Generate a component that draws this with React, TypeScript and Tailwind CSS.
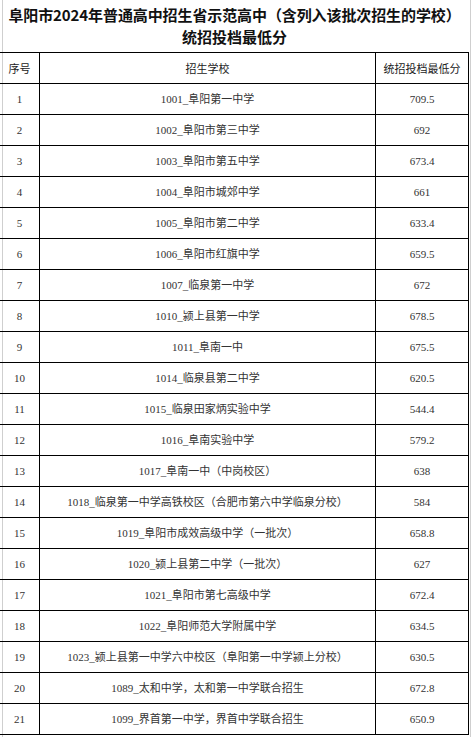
const rows: [string, string][] = [
  ['1001_阜阳第一中学', '709.5'],
  ['1002_阜阳市第三中学', '692'],
  ['1003_阜阳市第五中学', '673.4'],
  ['1004_阜阳市城郊中学', '661'],
  ['1005_阜阳市第二中学', '633.4'],
  ['1006_阜阳市红旗中学', '659.5'],
  ['1007_临泉第一中学', '672'],
  ['1010_颍上县第一中学', '678.5'],
  ['1011_阜南一中', '675.5'],
  ['1014_临泉县第二中学', '620.5'],
  ['1015_临泉田家炳实验中学', '544.4'],
  ['1016_阜南实验中学', '579.2'],
  ['1017_阜南一中（中岗校区）', '638'],
  ['1018_临泉第一中学高铁校区（合肥市第六中学临泉分校）', '584'],
  ['1019_阜阳市成效高级中学（一批次）', '658.8'],
  ['1020_颍上县第二中学（一批次）', '627'],
  ['1021_阜阳市第七高级中学', '672.4'],
  ['1022_阜阳师范大学附属中学', '634.5'],
  ['1023_颍上县第一中学六中校区（阜阳第一中学颍上分校）', '630.5'],
  ['1089_太和中学，太和第一中学联合招生', '672.8'],
  ['1099_界首第一中学，界首中学联合招生', '650.9'],
];

const body = "font-['Liberation_Serif','Noto_Sans_CJK_SC',serif]";

export default function App() {
  return (
    <div className="w-[473px] h-[737px] overflow-hidden bg-white">
      <div className="ml-[2px] mr-[2px] h-full border-x border-[#cfcfcf]">
        <div className="-ml-[3px] w-[469px]">
          <div className="h-[52px] pt-[4px] text-center font-['Noto_Sans_CJK_SC',sans-serif] font-bold text-[15px] leading-[22px] text-[#111] whitespace-nowrap">
            <div className="tracking-[-0.1px]">阜阳市2024年普通高中招生省示范高中（含列入该批次招生的学校）</div>
            <div>统招投档最低分</div>
          </div>
          <div className="border-t border-black">
            <div className="flex h-[31px] border-b border-black text-[11px] text-[#222] font-['Noto_Sans_CJK_SC',sans-serif]">
              <div className="w-[40px] border-r border-black flex items-center justify-center">序号</div>
              <div className="w-[336px] border-r border-black flex items-center justify-center">招生学校</div>
              <div className="w-[93px] border-r border-black flex items-center justify-center">统招投档最低分</div>
            </div>
            {rows.map(([name, score], i) => (
              <div key={i} className={`flex h-[31px] border-b border-black text-[11px] text-[#333] ${body}`}>
                <div className="w-[40px] border-r border-black flex items-center justify-center">{i + 1}</div>
                <div className="w-[336px] border-r border-black flex items-center justify-center whitespace-nowrap">{name}</div>
                <div className="w-[93px] border-r border-black flex items-center justify-center">{score}</div>
              </div>
            ))}
          </div>
        </div>
      </div>
    </div>
  );
}
